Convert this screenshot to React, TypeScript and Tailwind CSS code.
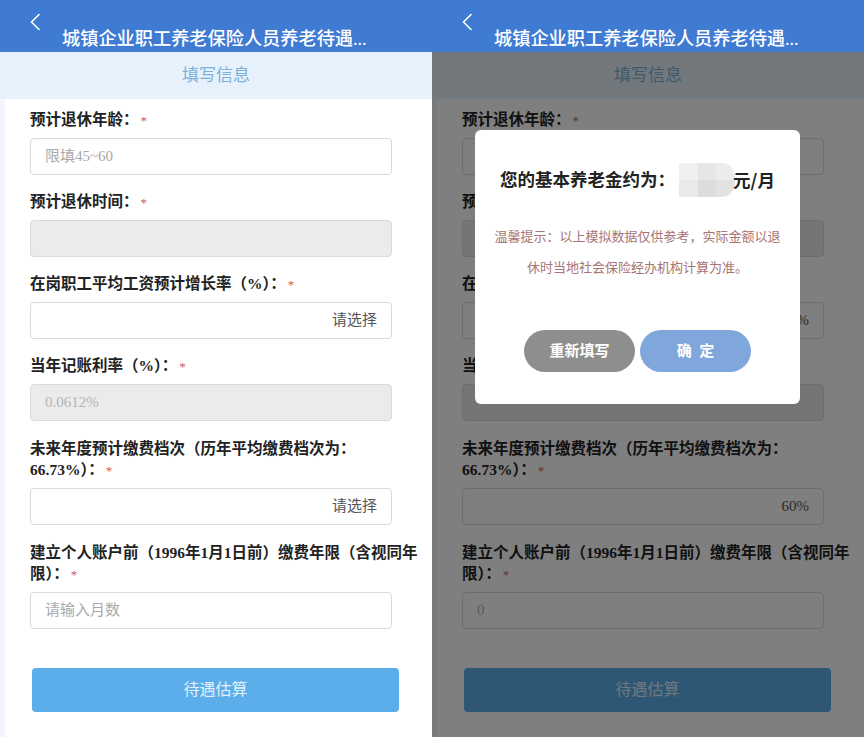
import type { ReactNode } from 'react'

type Field = {
  label: ReactNode
  twoLine?: boolean
  disabled?: boolean
  text?: string
  tone?: 'placeholder' | 'muted' | 'value'
  right?: boolean
}

const Star = () => <span className="ml-[2px] text-[13px] font-normal leading-none text-[#cf5a5a]">*</span>

const leftFields: Field[] = [
  { label: <>预计退休年龄：<Star /></>, text: '限填45~60', tone: 'placeholder' },
  { label: <>预计退休时间：<Star /></>, disabled: true },
  { label: <>在岗职工平均工资预计增长率（%）：<Star /></>, text: '请选择', tone: 'value', right: true },
  { label: <>当年记账利率（%）：<Star /></>, disabled: true, text: '0.0612%', tone: 'muted' },
  {
    label: <>未来年度预计缴费档次（历年平均缴费档次为：<br />66.73%）：<Star /></>,
    twoLine: true,
    text: '请选择',
    tone: 'value',
    right: true,
  },
  {
    label: <>建立个人账户前（1996年1月1日前）缴费年限（含视同年<br />限）：<Star /></>,
    twoLine: true,
    text: '请输入月数',
    tone: 'placeholder',
  },
]

// same form after the user filled it in — mostly hidden behind the dialog
const rightFields: Field[] = [
  { label: leftFields[0].label, text: '60', tone: 'value' },
  { label: leftFields[1].label, disabled: true },
  { label: leftFields[2].label, text: '6%', tone: 'value', right: true },
  { label: leftFields[3].label, disabled: true },
  { label: leftFields[4].label, twoLine: true, text: '60%', tone: 'value', right: true },
  { label: leftFields[5].label, twoLine: true, text: '0', tone: 'muted' },
]

function Header() {
  return (
    <div className="relative h-[52px] shrink-0 bg-[#3f7bd3]">
      <svg className="absolute left-[29px] top-[13px]" width="12" height="18" viewBox="0 0 12 18" fill="none">
        <polyline points="10,1.5 2.5,9 10,16.5" stroke="white" strokeWidth="1.6" strokeLinecap="round" strokeLinejoin="round" />
      </svg>
      <div className="pl-[62px] pt-[27px] text-[18.2px] font-medium leading-[24px] text-white">
        城镇企业职工养老保险人员养老待遇...
      </div>
    </div>
  )
}

function Input({ f }: { f: Field }) {
  const color =
    f.tone === 'placeholder' ? 'text-[#a9a9a9]' : f.tone === 'muted' ? 'text-[#b4b4b4]' : 'text-[#555]'
  return (
    <div
      className={`mt-[8px] flex h-[37px] w-[362px] items-center rounded-[4px] border border-[#dadada] px-[14px] text-[15px] ${
        f.disabled ? 'bg-[#ebebeb]' : 'bg-white'
      } ${f.right ? 'justify-end' : 'justify-start'} ${color}`}
    >
      {f.text}
    </div>
  )
}

function Form({ fields }: { fields: Field[] }) {
  return (
    <div className="flex-1 bg-[#f2f5f9] pl-[5px]">
      <div className="h-full bg-white pl-[25px] pr-[10px] pt-[11px]">
        {fields.map((f, i) => (
          <div key={i} className={i === 0 ? '' : 'mt-[17px]'}>
            <div
              className={`overflow-visible text-[15.5px] font-bold text-[#222] ${
                f.twoLine ? 'h-[42px] leading-[21px]' : 'h-[20px] leading-[20px]'
              }`}
            >
              {f.label}
            </div>
            <Input f={f} />
          </div>
        ))}
        <button className="ml-[2px] mt-[39px] flex h-[44px] w-[367px] items-center justify-center rounded-[4px] bg-[#5caeea] text-[16px] text-[#e3f1fb]">
          待遇估算
        </button>
      </div>
    </div>
  )
}

function Blur() {
  return (
    <span className="mx-[4px] inline-grid h-[34px] w-[56px] grid-cols-3 grid-rows-2 overflow-hidden rounded-r-[14px] align-middle">
      <span className="bg-[#efefef]" />
      <span className="bg-[#e6e6e6]" />
      <span className="bg-[#ececec]" />
      <span className="bg-[#e9e9e9]" />
      <span className="bg-[#dcdcdc]" />
      <span className="bg-[#e2e2e2]" />
    </span>
  )
}

function Dialog() {
  return (
    <div className="absolute left-[43px] top-[130px] h-[274px] w-[325px] rounded-[6px] bg-white">
      <div className="mt-[35px] flex h-[30px] items-center justify-center text-[17.5px] font-bold text-[#222]">
        您的基本养老金约为：
        <Blur />
        <span className="-ml-[6px] font-['Noto_Sans_CJK_SC',sans-serif]">元/月</span>
      </div>
      <p className="mt-[26px] text-center text-[13px] leading-[31px] text-[#a77474]">
        温馨提示：以上模拟数据仅供参考，实际金额以退
        <br />
        休时当地社会保险经办机构计算为准。
      </p>
      <div className="mt-[47px] flex justify-center gap-[5px]">
        <button className="h-[42px] w-[111px] rounded-full bg-[#8e8e8e] text-[15px] font-bold text-white">
          重新填写
        </button>
        <button className="h-[42px] w-[111px] rounded-full bg-[#80a7dc] text-[15px] font-bold text-white">
          确&nbsp;&nbsp;定
        </button>
      </div>
    </div>
  )
}

function Screen({ result }: { result?: boolean }) {
  return (
    <div className="relative flex h-[737px] w-[432px] shrink-0 flex-col overflow-hidden bg-white">
      <Header />
      <div className="relative flex flex-1 flex-col">
        <div className="flex h-[47px] shrink-0 items-center justify-center bg-[#e7f1fb] text-[17px] text-[#7cb0d6]">
          填写信息
        </div>
        <Form fields={result ? rightFields : leftFields} />
        {result ? <div className="absolute inset-0 bg-black/50" /> : null}
      </div>
      {result ? <Dialog /> : null}
    </div>
  )
}

export default function App() {
  return (
    <div className="flex h-[737px] w-[864px] overflow-hidden font-['Liberation_Serif','Noto_Sans_CJK_SC',serif]">
      <Screen />
      <Screen result />
    </div>
  )
}
